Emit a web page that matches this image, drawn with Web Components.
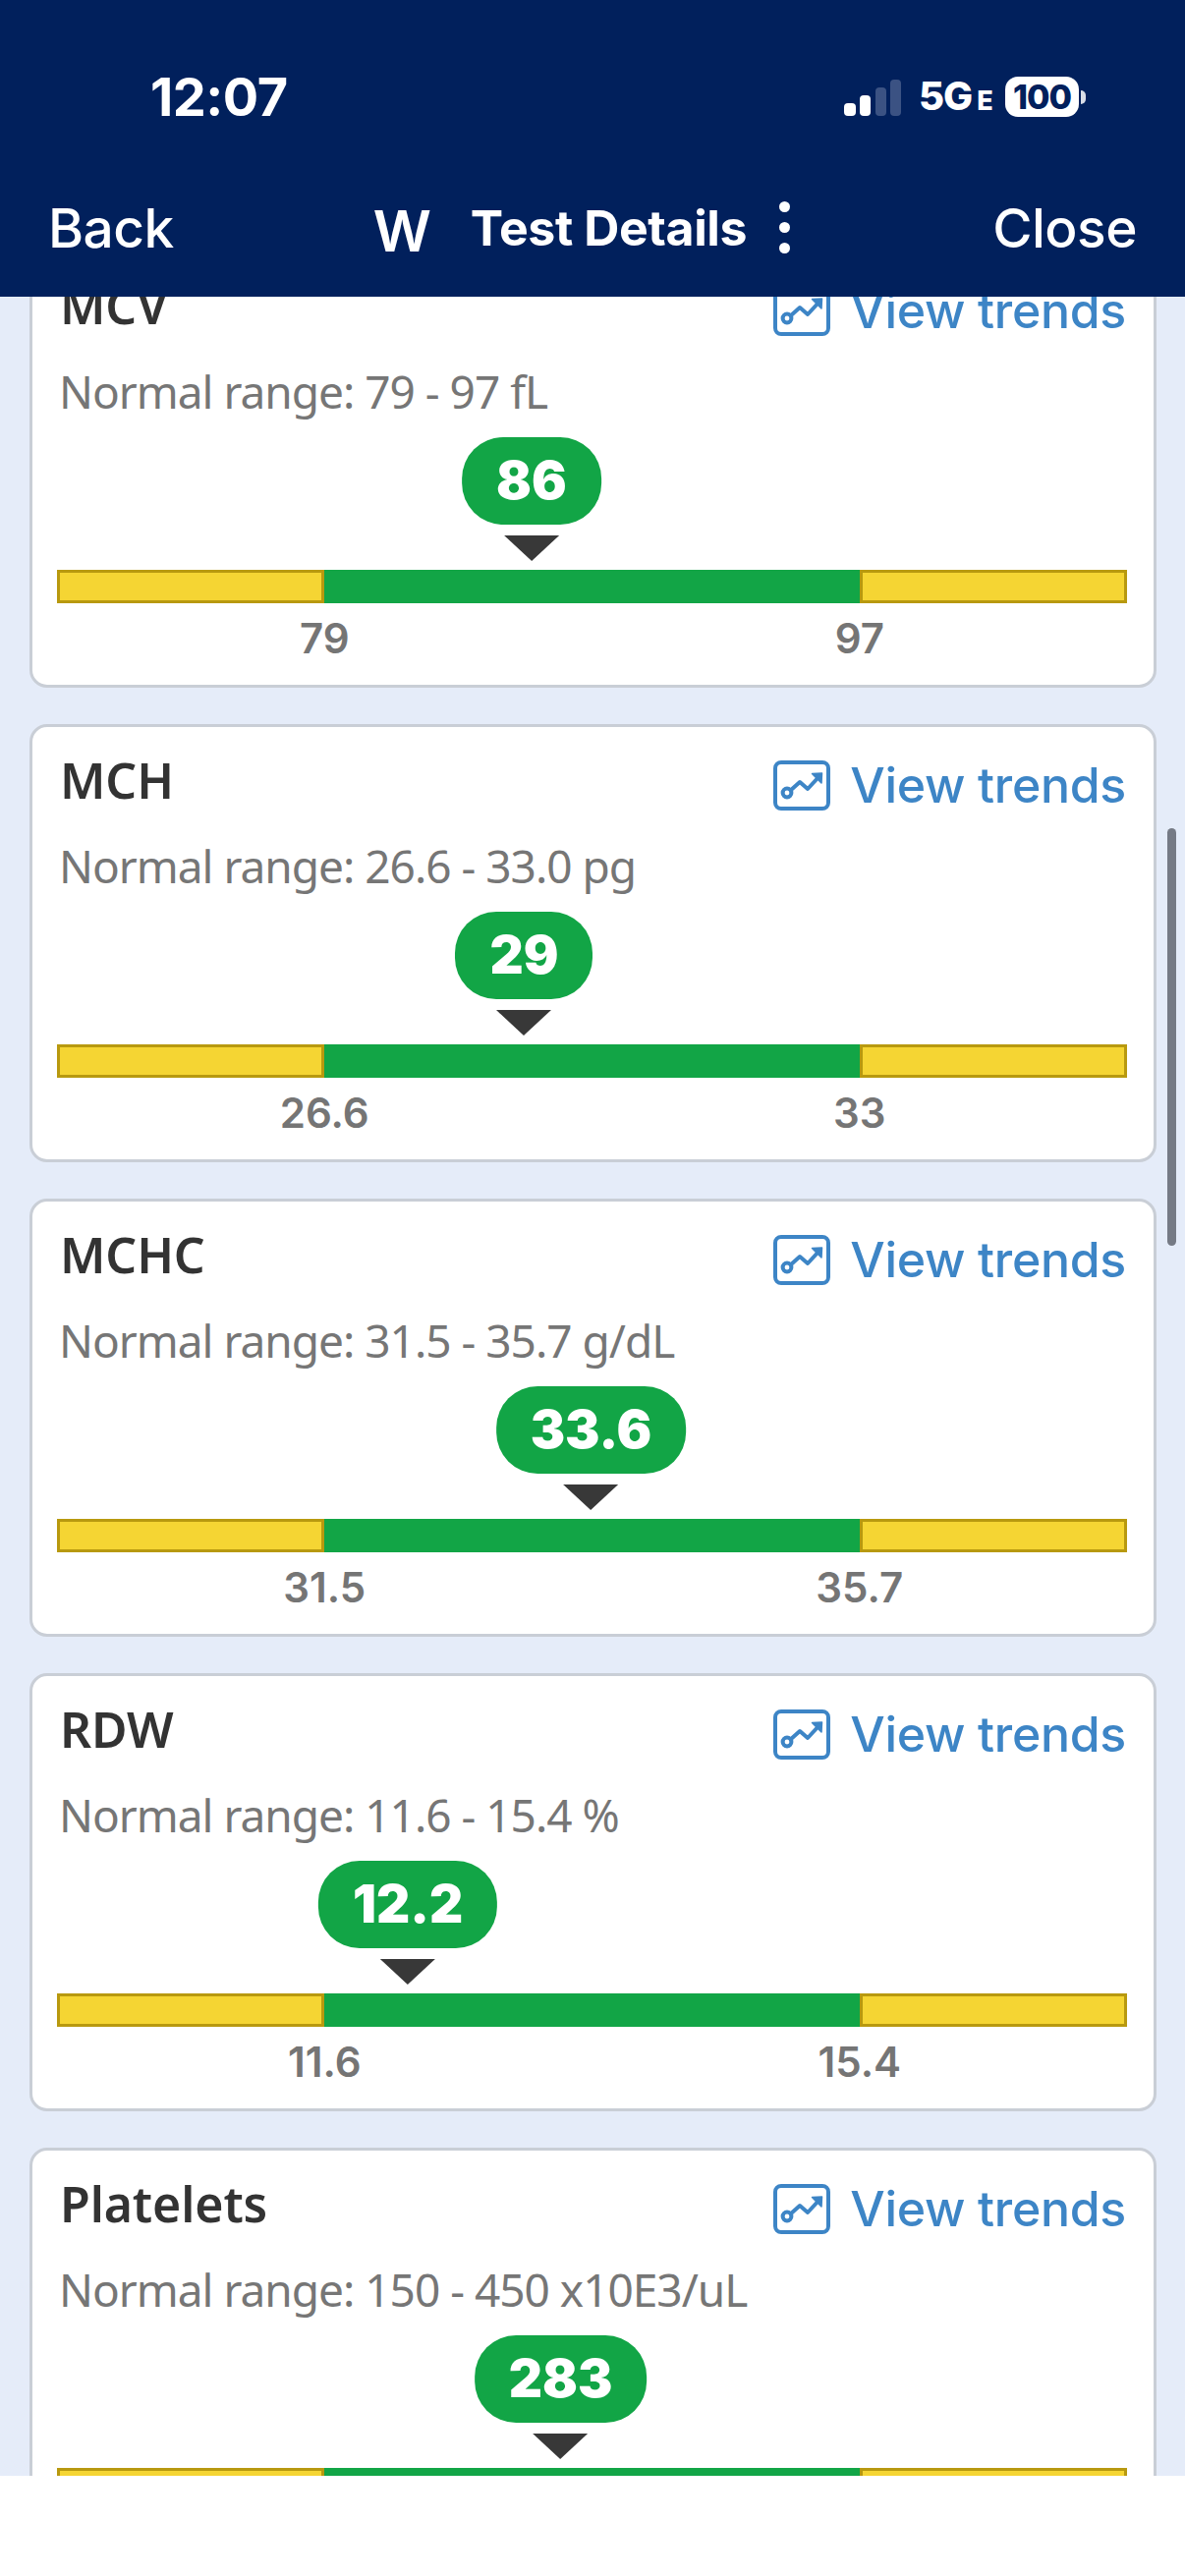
<!DOCTYPE html>
<html><head><meta charset="utf-8"><style>
html,body{margin:0;padding:0;background:#fff}
body{width:1206px;height:2622px;overflow:hidden;font-family:"Inter","Liberation Sans",sans-serif}
</style></head><body>
<app-screen>
  <app-header slot="header"></app-header>
  <lab-card name="MCV" range="79 - 97 fL" value="86" low="79" high="97"></lab-card>
  <lab-card name="MCH" range="26.6 - 33.0 pg" value="29" low="26.6" high="33"></lab-card>
  <lab-card name="MCHC" range="31.5 - 35.7 g/dL" value="33.6" low="31.5" high="35.7"></lab-card>
  <lab-card name="RDW" range="11.6 - 15.4 %" value="12.2" low="11.6" high="15.4"></lab-card>
  <lab-card name="Platelets" range="150 - 450 x10E3/uL" value="283" low="150" high="450"></lab-card>
</app-screen>
<script>
function shadow(el, html){ el.attachShadow({mode:'open'}).innerHTML = html; }

customElements.define('app-screen', class extends HTMLElement{
  constructor(){ super(); shadow(this, `<style>
    :host{display:flex;flex-direction:column;width:1206px;height:2622px;background:#fff;position:relative}
    .scroll{height:2218px;flex:none;overflow:hidden;background:#e5ecf9;position:relative}
    .list{display:flex;flex-direction:column;gap:37px;padding:0 29px 0 30px;margin-top:-48px}
    .thumb{position:absolute;right:9px;top:541px;width:9px;height:425px;border-radius:5px;background:#757a85}
  </style>
  <slot name="header"></slot>
  <div class="scroll"><div class="list"><slot></slot></div><div class="thumb"></div></div>`); }
});

customElements.define('app-header', class extends HTMLElement{
  constructor(){ super(); shadow(this, `<style>
    :host{display:flex;flex-direction:column;height:302px;flex:none;background:#01205c;color:#fff;font-family:"Inter","Liberation Sans",sans-serif;box-sizing:border-box}
    .status{height:194px;display:flex;align-items:flex-start;padding:0 101px 0 153px;box-sizing:border-box;justify-content:space-between}
    .time{font-size:54px;font-weight:700;line-height:60px;margin-top:69px;letter-spacing:-.5px}
    .right{display:flex;align-items:center;margin-top:78px;height:41px}
    .net{font-size:40px;font-weight:800;line-height:41px;margin-left:18px;letter-spacing:-1px;width:72px;white-space:nowrap;margin-top:3px}
    .net small{font-size:27px;font-weight:800;margin-left:5px}
    .batt{margin-left:16px;display:flex;align-items:center}
    .cell{width:75px;height:41px;border-radius:13px;background:#fff;color:#01205c;font-size:34px;font-weight:800;line-height:41px;text-align:center;letter-spacing:-1px}
    .nub{width:5px;height:14px;background:#fff;border-radius:0 6px 6px 0;margin-left:2px;opacity:.85}
    .nav{flex:1;display:flex;align-items:center;padding:0 49px 0 49px}
    .link{font-size:55px;font-weight:500;letter-spacing:-.5px;line-height:60px;margin-top:-32px}
    .center{display:flex;align-items:center;margin-left:203px;margin-right:auto;margin-top:-32px}
    .w{font-size:58px;font-weight:600;line-height:60px;width:56px;margin-top:6px;letter-spacing:-2px}
    .title{font-size:50px;font-weight:700;letter-spacing:-.4px;margin-left:43px;line-height:60px;white-space:nowrap}
    .dots{margin-left:33px;display:flex;flex-direction:column;gap:10px;margin-top:-2px}
    .dots i{display:block;width:11px;height:11px;border-radius:50%;background:#fff}
  </style>
  <div class="status">
    <div class="time">12:07</div>
    <div class="right">
      <svg width="58" height="37" viewBox="0 0 58 37" style="margin-top:2px"><rect x="0" y="24" width="12" height="13" rx="4" fill="#fff"/><rect x="16" y="16" width="11" height="21" rx="4" fill="#fff"/><rect x="32" y="8" width="11" height="29" rx="4" fill="#3b5283"/><rect x="47" y="0" width="11" height="37" rx="4" fill="#3b5283"/></svg>
      <div class="net">5G<small>E</small></div>
      <div class="batt"><div class="cell">100</div><div class="nub"></div></div>
    </div>
  </div>
  <div class="nav">
    <div class="link">Back</div>
    <div class="center"><div class="w">W</div><div class="title">Test Details</div><div class="dots"><i></i><i></i><i></i></div></div>
    <div class="link">Close</div>
  </div>`); }
});

customElements.define('lab-card', class extends HTMLElement{
  constructor(){ super();
    const a=this.getAttribute.bind(this), v=+a('value'), lo=+a('low'), hi=+a('high');
    const pos=25+50*(v-lo)/(hi-lo);
    shadow(this, `<style>
    :host{display:block;box-sizing:border-box;height:446px;background:#fff;border:3px solid #c9ced6;border-radius:18px;padding:0 27px 0 25px;flex:none;overflow:hidden}
    .head{display:flex;justify-content:space-between;align-items:flex-start;height:92px;padding-top:23px;box-sizing:border-box}
    .name{font-family:"Noto Sans",sans-serif;font-weight:600;font-size:50px;line-height:60px;color:#333;margin-left:3px;letter-spacing:-.1px;margin-top:1px}
    .trend{display:flex;align-items:center;gap:20px;color:#3d85c6;font-size:50px;font-weight:500;line-height:56px;letter-spacing:-.3px;margin-right:1px;margin-top:8px}
    .range{font-family:"Noto Sans",sans-serif;font-size:46px;line-height:60px;color:#767676;margin-left:2px;letter-spacing:-1px;height:58px;margin-top:19px;white-space:nowrap}
    .track{height:154px;box-sizing:border-box;padding-top:19px}
    .marker{width:max-content;display:flex;flex-direction:column;align-items:center;gap:11px;margin-left:calc(${pos}% - 1px);transform:translateX(-50%)}
    .pill{height:89px;border-radius:42px;background:#12a546;color:#fff;font-size:53px;font-weight:900;line-height:89px;padding:0 35px}
    .tri{width:0;height:0;border-left:28px solid transparent;border-right:28px solid transparent;border-top:26px solid #383838}
    .bar{display:grid;grid-template-columns:1fr 2fr 1fr;height:34px}
    .bar div{box-sizing:border-box}
    .y{background:#f5d533;border:3px solid #b8990f}
    .g{background:#12a546}
    .labels{display:grid;grid-template-columns:1fr 2fr 1fr;margin-top:11px;color:#757575;font-size:42px;font-weight:600;line-height:50px}
    .labels span{grid-column:2;grid-row:1;width:0;justify-self:start;display:flex;justify-content:center;white-space:nowrap}
    .labels span+span{justify-self:end}
    </style>
    <div class="head"><div class="name">${a('name')}</div>
      <div class="trend"><svg width="58" height="51" viewBox="0 0 58 51" fill="none" stroke="currentColor" stroke-width="4"><rect x="2" y="2" width="54" height="47" rx="6"/><circle cx="14" cy="33" r="4.4"/><path d="M17.5 30.5 L27 22 L35 29 L47 16" stroke-linecap="round" stroke-linejoin="round"/><path d="M39.5 13.5 L49.5 13 L49 23 Z" fill="currentColor" stroke-width="1.5" stroke-linejoin="round"/></svg><span>View trends</span></div>
    </div>
    <div class="range">Normal range: ${a('range')}</div>
    <div class="track"><div class="marker"><div class="pill">${a('value')}</div><div class="tri"></div></div></div>
    <div class="bar"><div class="y"></div><div class="g"></div><div class="y"></div></div>
    <div class="labels"><span>${a('low')}</span><span>${a('high')}</span></div>`);
  }
});
</script>
</body></html>
